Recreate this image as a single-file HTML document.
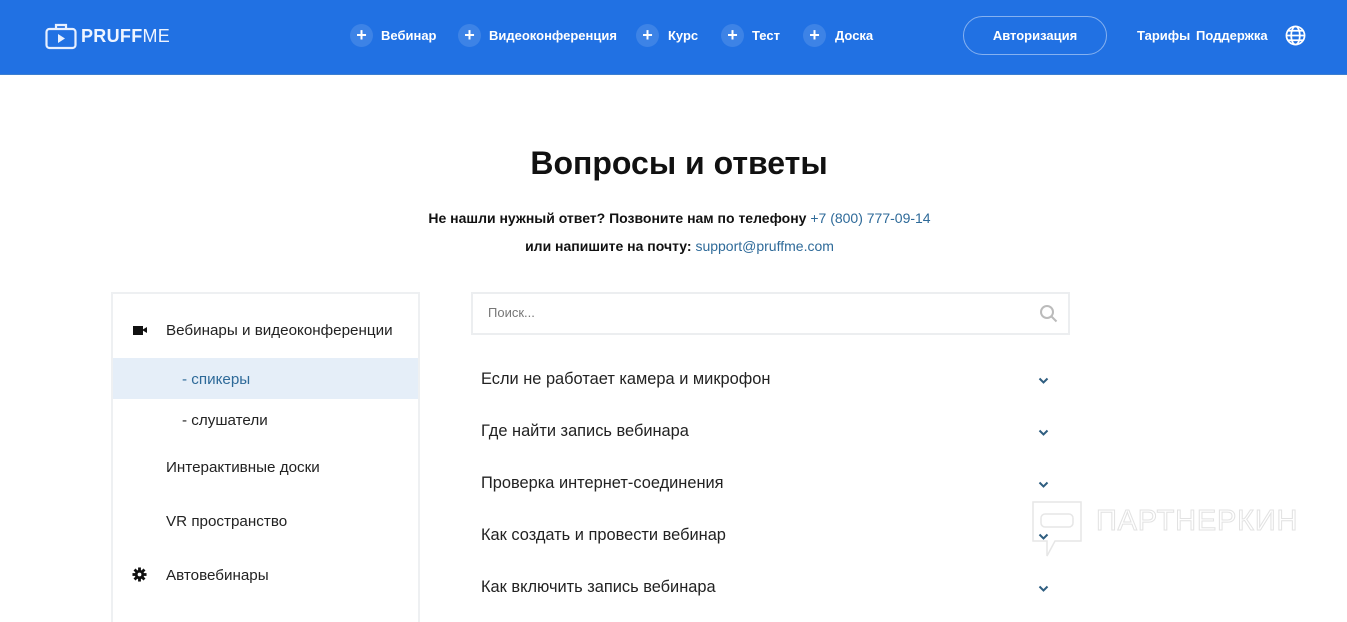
<!DOCTYPE html>
<html><head><meta charset="utf-8"><style>
*{margin:0;padding:0;box-sizing:border-box}
body{width:1347px;height:609px;overflow:hidden;background:#fff;font-family:"Liberation Sans",sans-serif;color:#111;position:relative}
.hdr{position:absolute;left:0;top:0;width:1347px;height:75px;background:#2171e3;border-bottom:1px solid #3d7fd0}
.a{position:absolute;white-space:nowrap}
.nav{color:#fff;font-size:13px;font-weight:bold;top:28px}
.pl{position:absolute;top:24px;width:23px;height:23px;border-radius:50%;background:rgba(255,255,255,.13);color:#fff;font-weight:bold;font-size:18px;line-height:22px;text-align:center}
.side{position:absolute;left:111px;top:292px;width:309px;height:330px;border:2px solid #eef0f2;border-bottom:none}
.si{position:absolute;font-size:15.2px;color:#222}
.q{position:absolute;left:481px;font-size:16.4px;color:#222}
.ch{position:absolute;left:1038px;width:11px;height:11px}
</style></head><body>
<div class="hdr">
<svg class="a" style="left:45px;top:22px" width="32" height="28" viewBox="0 0 32 28" fill="none" stroke="#e8f0ff" stroke-width="2.2"><rect x="1.5" y="7" width="29" height="19" rx="3"/><path d="M11 7V3h10v4"/><path d="M13 12v9l7-4.5z" fill="#e8f0ff" stroke="none"/></svg>
<div class="a" style="left:81px;top:26px;color:#eef4ff;font-size:18px;letter-spacing:.3px"><b>PRUFF</b><span style="font-weight:300">ME</span></div>
<div class="pl" style="left:350px">+</div><div class="a nav" style="left:381px">Вебинар</div>
<div class="pl" style="left:458px">+</div><div class="a nav" style="left:489px">Видеоконференция</div>
<div class="pl" style="left:636px">+</div><div class="a nav" style="left:668px">Курс</div>
<div class="pl" style="left:721px">+</div><div class="a nav" style="left:752px">Тест</div>
<div class="pl" style="left:803px">+</div><div class="a nav" style="left:835px">Доска</div>
<div class="a" style="left:963px;top:16px;width:144px;height:39px;border:1px solid rgba(255,255,255,.45);border-radius:20px;color:#fff;font-size:13px;font-weight:bold;text-align:center;line-height:37px">Авторизация</div>
<div class="a nav" style="left:1137px">Тарифы</div>
<div class="a nav" style="left:1196px">Поддержка</div>
<svg class="a" style="left:1285px;top:25px" width="21" height="21" viewBox="0 0 22 22" fill="none" stroke="#fff" stroke-width="1.8"><circle cx="11" cy="11" r="9.5"/><ellipse cx="11" cy="11" rx="4.5" ry="9.5"/><path d="M1.5 11h19M3 6h16M3 16h16"/></svg>
</div>
<div class="a" style="left:0;width:1347px;text-align:center;top:145px;font-size:32px;font-weight:bold;color:#111;padding-left:11px">Вопросы и ответы</div>
<div class="a" style="left:0;width:1347px;text-align:center;top:210px;font-size:14px;font-weight:bold;padding-left:12px">Не нашли нужный ответ? Позвоните нам по телефону <span style="color:#2e6a99;font-weight:normal">+7 (800) 777-09-14</span></div>
<div class="a" style="left:0;width:1347px;text-align:center;top:238px;font-size:14px;font-weight:bold;padding-left:12px">или напишите на почту: <span style="color:#2e6a99;font-weight:normal">support@pruffme.com</span></div>
<div class="side">
<div class="a" style="left:0;top:64px;width:305px;height:41px;background:#e5eef8"></div>
<div class="a" style="left:20px;top:32px;width:10px;height:9px;background:#111"></div><div class="a" style="left:29px;top:33px;width:0;height:0;border-top:3.5px solid transparent;border-bottom:3.5px solid transparent;border-right:5px solid #111"></div>
<div class="si" style="left:53px;top:28px">Вебинары и видеоконференции</div>
<div class="si" style="left:69px;top:77px;color:#2e6a99">- спикеры</div>
<div class="si" style="left:69px;top:118px">- слушатели</div>
<div class="si" style="left:53px;top:165px">Интерактивные доски</div>
<div class="si" style="left:53px;top:219px">VR пространство</div>
<svg class="a" style="left:19px;top:273px" width="15" height="15" viewBox="0 0 16 16"><g fill="#111"><circle cx="8" cy="8" r="5"/><rect x="6.5" y="0.5" width="3" height="15"/><rect x="0.5" y="6.5" width="15" height="3"/><rect x="6.5" y="0.5" width="3" height="15" transform="rotate(45 8 8)"/><rect x="6.5" y="0.5" width="3" height="15" transform="rotate(-45 8 8)"/></g><circle cx="8" cy="8" r="2" fill="#fff"/></svg>
<div class="si" style="left:53px;top:273px">Автовебинары</div>
</div>
<div class="a" style="left:471px;top:292px;width:599px;height:43px;border:2px solid #eceef0"><span class="a" style="left:15px;top:11px;font-size:13px;color:#777">Поиск...</span>
<svg class="a" style="left:566px;top:10px" width="20" height="20" viewBox="0 0 20 20" fill="none" stroke="#bbb" stroke-width="2"><circle cx="8" cy="8" r="6"/><path d="M12.5 12.5l5 5"/></svg></div>
<div class="q" style="top:370px">Если не работает камера и микрофон</div>
<div class="q" style="top:422px">Где найти запись вебинара</div>
<div class="q" style="top:474px">Проверка интернет-соединения</div>
<div class="q" style="top:526px">Как создать и провести вебинар</div>
<div class="q" style="top:578px">Как включить запись вебинара</div>
<svg class="ch" style="top:375px" viewBox="0 0 11 11" fill="none" stroke="#2f5e80" stroke-width="2"><path d="M1.5 3.5l4 4 4-4"/></svg>
<svg class="ch" style="top:427px" viewBox="0 0 11 11" fill="none" stroke="#2f5e80" stroke-width="2"><path d="M1.5 3.5l4 4 4-4"/></svg>
<svg class="ch" style="top:479px" viewBox="0 0 11 11" fill="none" stroke="#2f5e80" stroke-width="2"><path d="M1.5 3.5l4 4 4-4"/></svg>
<svg class="ch" style="top:531px" viewBox="0 0 11 11" fill="none" stroke="#2f5e80" stroke-width="2"><path d="M1.5 3.5l4 4 4-4"/></svg>
<svg class="ch" style="top:583px" viewBox="0 0 11 11" fill="none" stroke="#2f5e80" stroke-width="2"><path d="M1.5 3.5l4 4 4-4"/></svg>
<svg class="a" style="left:1030px;top:500px" width="54" height="58" viewBox="0 0 54 58" fill="none" stroke="#e6e6e6" stroke-width="1.5"><path d="M3 2h48v39H25l-8 15v-15H3z"/><rect x="11" y="14" width="32" height="13" rx="4"/></svg>
<div class="a" style="left:1096px;top:505px;font-size:29px;color:transparent;-webkit-text-stroke:1px #e2e2e2;letter-spacing:.8px">ПАРТНЕРКИН</div>
</body></html>
